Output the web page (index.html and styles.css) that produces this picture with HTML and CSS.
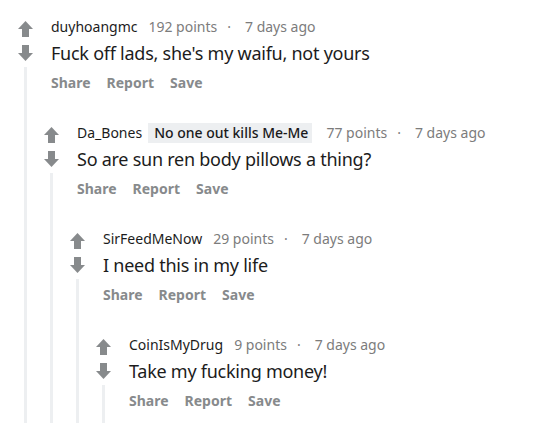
FILE: index.html
```html
<!DOCTYPE html>
<html>
<head>
<meta charset="utf-8">
<link rel="stylesheet" href="styles.css">
</head>
<body>
<div class="thread">
  <div class="comment">
    <div class="vote">
      <svg class="arrow" width="15" height="16" viewBox="0 0 15 16"><path d="M7.5 0 L15 8 L11 8 L11 16 L4 16 L4 8 L0 8 Z" fill="#878a8c"/></svg>
      <svg class="arrow down" width="15" height="16" viewBox="0 0 15 16"><path d="M7.5 16 L15 8 L11 8 L11 0 L4 0 L4 8 L0 8 Z" fill="#878a8c"/></svg>
      <div class="line"></div>
    </div>
    <div class="body">
      <div class="content">
        <div class="meta"><span class="user">duyhoangmc</span><span class="points">192 points</span><span class="dot">·</span><span class="time">7 days ago</span></div>
        <div class="text">Fuck off lads, she's my waifu, not yours</div>
        <div class="actions"><span>Share</span><span>Report</span><span>Save</span></div>
      </div>
      <div class="children">
        <div class="comment">
          <div class="vote">
            <svg class="arrow" width="15" height="16" viewBox="0 0 15 16"><path d="M7.5 0 L15 8 L11 8 L11 16 L4 16 L4 8 L0 8 Z" fill="#878a8c"/></svg>
            <svg class="arrow down" width="15" height="16" viewBox="0 0 15 16"><path d="M7.5 16 L15 8 L11 8 L11 0 L4 0 L4 8 L0 8 Z" fill="#878a8c"/></svg>
            <div class="line"></div>
          </div>
          <div class="body">
            <div class="content">
              <div class="meta"><span class="user">Da_Bones</span><span class="flair">No one out kills Me-Me</span><span class="points">77 points</span><span class="dot">·</span><span class="time">7 days ago</span></div>
              <div class="text">So are sun ren body pillows a thing?</div>
              <div class="actions"><span>Share</span><span>Report</span><span>Save</span></div>
            </div>
            <div class="children">
              <div class="comment">
                <div class="vote">
                  <svg class="arrow" width="15" height="16" viewBox="0 0 15 16"><path d="M7.5 0 L15 8 L11 8 L11 16 L4 16 L4 8 L0 8 Z" fill="#878a8c"/></svg>
                  <svg class="arrow down" width="15" height="16" viewBox="0 0 15 16"><path d="M7.5 16 L15 8 L11 8 L11 0 L4 0 L4 8 L0 8 Z" fill="#878a8c"/></svg>
                  <div class="line"></div>
                </div>
                <div class="body">
                  <div class="content">
                    <div class="meta"><span class="user">SirFeedMeNow</span><span class="points">29 points</span><span class="dot">·</span><span class="time">7 days ago</span></div>
                    <div class="text">I need this in my life</div>
                    <div class="actions"><span>Share</span><span>Report</span><span>Save</span></div>
                  </div>
                  <div class="children">
                    <div class="comment">
                      <div class="vote">
                        <svg class="arrow" width="15" height="16" viewBox="0 0 15 16"><path d="M7.5 0 L15 8 L11 8 L11 16 L4 16 L4 8 L0 8 Z" fill="#878a8c"/></svg>
                        <svg class="arrow down" width="15" height="16" viewBox="0 0 15 16"><path d="M7.5 16 L15 8 L11 8 L11 0 L4 0 L4 8 L0 8 Z" fill="#878a8c"/></svg>
                        <div class="line"></div>
                      </div>
                      <div class="body">
                        <div class="content last">
                          <div class="meta"><span class="user">CoinIsMyDrug</span><span class="points">9 points</span><span class="dot">·</span><span class="time">7 days ago</span></div>
                          <div class="text">Take my fucking money!</div>
                          <div class="actions"><span>Share</span><span>Report</span><span>Save</span></div>
                        </div>
                      </div>
                    </div>
                  </div>
                </div>
              </div>
            </div>
          </div>
        </div>
      </div>
    </div>
  </div>
</div>
</body>
</html>
```
FILE: styles.css
```css
html, body {
  margin: 0;
  padding: 0;
  background: #ffffff;
  overflow: hidden;
}
body {
  font-family: "Noto Sans", "Open Sans", sans-serif;
  color: #1c1c1c;
}
.thread {
  padding: 17px 0 0 12px;
}
.comment {
  display: flex;
  align-items: stretch;
}
.vote {
  width: 26px;
  flex: none;
  display: flex;
  flex-direction: column;
  align-items: flex-start;
  padding-top: 4px;
}
.arrow {
  display: block;
  margin-left: 6px;
}
.arrow.down {
  margin-top: 8px;
}
.line {
  flex: 1;
  width: 3px;
  margin-left: 12px;
  margin-top: 6px;
  background: #edeff1;
}
.body {
  flex: 1;
  min-width: 0;
}
.content {
  padding-left: 13px;
  padding-bottom: 30px;
}
.content.last {
  padding-bottom: 40px;
}
.meta {
  display: flex;
  align-items: center;
  height: 20px;
  font-size: 14px;
  line-height: 20px;
  white-space: nowrap;
}
.user {
  color: #1c1c1c;
}
.flair {
  margin-left: 6px;
  background: #edeff1;
  padding: 0 4px 0 6px;
  color: #1a1a1b;
  font-weight: 500;
}
.points {
  margin-left: 11px;
  color: #7c7c7c;
}
.flair + .points {
  margin-left: 14px;
}
.dot {
  color: #7c7c7c;
  margin: 0 14px 0 10px;
}
.time {
  color: #7c7c7c;
}
.text {
  margin-top: 3px;
  font-size: 18px;
  letter-spacing: -0.25px;
  line-height: 26px;
  color: #1c1c1c;
  white-space: nowrap;
}
.actions {
  margin-top: 7px;
  display: flex;
  gap: 16px;
  font-size: 14px;
  line-height: 20px;
  font-weight: 700;
  color: #878a8c;
}
```
